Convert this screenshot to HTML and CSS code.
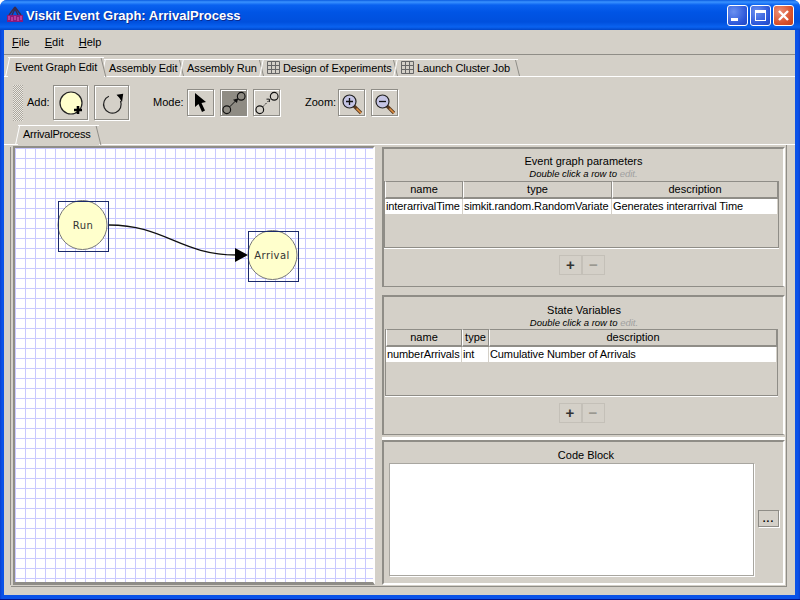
FILE: index.html
```html
<!DOCTYPE html>
<html lang="en">
<head>
  <meta charset="UTF-8">
  <title>Viskit Event Graph: ArrivalProcess</title>
  <link rel="stylesheet" href="styles.css">
</head>
<body>
<div class="window">
  <div class="titlebar">
    <svg class="app-icon" width="18" height="18" viewBox="0 0 18 18">
      <path d="M9 1 L3 9 M9 1 L15 9 M6 9 L9 3 L12 9" stroke="#3a2a4a" stroke-width="1.4" fill="none"/>
      <rect x="1" y="9" width="16" height="7" fill="#8a1a7a"/>
      <path d="M3 10v4M6 11v4M9 10v4M12 11v4M15 10v4" stroke="#e060c0" stroke-width="1"/>
    </svg>
    <span class="title-text">Viskit Event Graph: ArrivalProcess</span>
    <div class="win-buttons">
      <div class="win-btn"><span class="glyph-min"></span></div>
      <div class="win-btn"><span class="glyph-max"></span></div>
      <div class="win-btn win-close">
        <svg width="13" height="13" viewBox="0 0 13 13"><path d="M2 2 L11 11 M11 2 L2 11" stroke="#fff" stroke-width="2.4"/></svg>
      </div>
    </div>
  </div>

  <div class="client">
    <div class="menubar">
      <span class="menu"><u>F</u>ile</span>
      <span class="menu"><u>E</u>dit</span>
      <span class="menu"><u>H</u>elp</span>
    </div>

    <div class="tabs">
      <div class="tab tab-active w-ege">Event Graph Edit</div>
      <div class="tab w-ae">Assembly Edit</div>
      <div class="tab w-ar">Assembly Run</div>
      <div class="tab w-doe"><svg class="grid-icon" width="13" height="13" viewBox="0 0 13 13"><path d="M.5 .5h12v12h-12zM.5 4.500h12M.5 8.500h12M4.500 .5v12M8.500 .5v12" fill="none" stroke="#666"/></svg>Design of Experiments</div>
      <div class="tab w-lcj"><svg class="grid-icon" width="13" height="13" viewBox="0 0 13 13"><path d="M.5 .5h12v12h-12zM.5 4.500h12M.5 8.500h12M4.500 .5v12M8.500 .5v12" fill="none" stroke="#666"/></svg>Launch Cluster Job</div>
    </div>

    <div class="toolbar">
      <div class="gripper"></div>
      <span class="tool-label label-add">Add:</span>
      <button class="tool big">
        <svg width="27" height="27" viewBox="0 0 27 27">
          <circle cx="14" cy="14" r="11" fill="#ffffcc" stroke="#222" stroke-width="1.2"/>
          <path d="M21 17v8M17 21h8" stroke="#000" stroke-width="2.6"/>
        </svg>
      </button>
      <button class="tool big gap-big">
        <svg width="26" height="26" viewBox="0 0 26 26">
          <path d="M9.900 6.300 A8.800 8.800 0 1 0 21.500 11" fill="none" stroke="#222" stroke-width="1.2"/>
          <path d="M17.500 4.700 L24.200 3.700 L23 12.300 L20.500 8z" fill="#000"/>
        </svg>
      </button>
      <span class="tool-label label-mode">Mode:</span>
      <button class="tool">
        <svg width="16" height="22" viewBox="0 0 16 22"><path d="M2 1 L2 15 L5.500 12 L9 20 L12 18.500 L8.500 11 L13 10z" fill="#000"/></svg>
      </button>
      <button class="tool gap-small pressed">
        <svg width="26" height="26" viewBox="0 0 26 26">
          <circle cx="6" cy="20" r="4" fill="none" stroke="#111" stroke-width="1.200"/>
          <circle cx="21" cy="6" r="4" fill="none" stroke="#111" stroke-width="1.200"/>
          <path d="M9 17 L17 9" stroke="#111"/><path d="M18 8 L12.500 9.500 L16.500 13z" fill="#111"/>
        </svg>
      </button>
      <button class="tool gap-small">
        <svg width="26" height="26" viewBox="0 0 26 26">
          <circle cx="6" cy="20" r="4" fill="none" stroke="#111" stroke-width="1.200"/>
          <circle cx="21" cy="6" r="4" fill="none" stroke="#111" stroke-width="1.200"/>
          <path d="M9 17 L17 9" stroke="#111" stroke-dasharray="2 1.500"/><path d="M13 9h3M16 9v3" stroke="#111"/>
        </svg>
      </button>
      <span class="tool-label label-zoom">Zoom:</span>
      <button class="tool">
        <svg width="24" height="24" viewBox="0 0 24 24">
          <path d="M14 15 L21 22" stroke="#5a3a20" stroke-width="3.200"/><path d="M16.500 17.500 L21 22" stroke="#e09040" stroke-width="1.600"/>
          <circle cx="9.500" cy="10.500" r="6.500" fill="#c4c4e4" stroke="#222" stroke-width="1.200"/>
          <path d="M6 10.500h7M9.500 7v7" stroke="#111" stroke-width="1.300"/>
        </svg>
      </button>
      <button class="tool gap-small">
        <svg width="24" height="24" viewBox="0 0 24 24">
          <path d="M14 15 L21 22" stroke="#5a3a20" stroke-width="3.200"/><path d="M16.500 17.500 L21 22" stroke="#e09040" stroke-width="1.600"/>
          <circle cx="9.500" cy="10.500" r="6.500" fill="#c4c4e4" stroke="#222" stroke-width="1.200"/>
          <path d="M6 10.500h7" stroke="#111" stroke-width="1.300"/>
        </svg>
      </button>
    </div>

    <div class="subtabs">
      <div class="tab tab-active w-arrival">ArrivalProcess</div>
    </div>

    <div class="split">
      <div class="canvas">
        <svg class="graph" width="358" height="433" viewBox="0 0 358 433">
          <path d="M94 77 C 150 77, 165 107, 222 107" fill="none" stroke="#111" stroke-width="1.300"/>
          <path d="M220 100 L233 107 L220 114z" fill="#000"/>
          <circle cx="67.500" cy="77" r="24.500" fill="#ffffcc" stroke="#777" stroke-width="1"/>
          <rect x="43.500" y="53.500" width="50" height="50" fill="none" stroke="#1a2a6a"/>
          <text x="68" y="81" class="node-label">Run</text>
          <circle cx="257.500" cy="107" r="24.500" fill="#ffffcc" stroke="#777" stroke-width="1"/>
          <rect x="233.500" y="83.500" width="50" height="50" fill="none" stroke="#1a2a6a"/>
          <text x="257" y="111" class="node-label">Arrival</text>
        </svg>
      </div>

      <div class="side">
        <section class="panel panel-params">
          <h2 class="panel-title">Event graph parameters</h2>
          <p class="hint">Double click a row to <span class="hint-off">edit.</span></p>
          <div class="table">
            <div class="tr th cols-params"><span>name</span><span>type</span><span>description</span></div>
            <div class="tr td cols-params"><span>interarrivalTime</span><span>simkit.random.RandomVariate</span><span>Generates interarrival Time</span></div>
          </div>
          <div class="plusminus"><button class="pm">+</button><button class="pm pm-off">−</button></div>
        </section>

        <section class="panel panel-state">
          <h2 class="panel-title">State Variables</h2>
          <p class="hint">Double click a row to <span class="hint-off">edit.</span></p>
          <div class="table">
            <div class="tr th cols-state"><span>name</span><span>type</span><span>description</span></div>
            <div class="tr td cols-state"><span>numberArrivals</span><span>int</span><span>Cumulative Number of Arrivals</span></div>
          </div>
          <div class="plusminus"><button class="pm">+</button><button class="pm pm-off">−</button></div>
        </section>

        <section class="panel panel-code">
          <h2 class="panel-title">Code Block</h2>
          <div class="code-row">
            <div class="code-box"></div>
            <button class="more">...</button>
          </div>
        </section>
      </div>
    </div>
  </div>
</div>
</body>
</html>
```

FILE: styles.css
```css
* {
  box-sizing: border-box;
  margin: 0;
  padding: 0;
}

html, body {
  width: 800px;
  height: 600px;
  overflow: hidden;
}

body {
  font-family: "Liberation Sans", Arial, sans-serif;
  font-size: 11px;
  color: #000;
}

/* Window frame */
.window {
  width: 800px;
  height: 600px;
  display: flex;
  flex-direction: column;
  padding: 0 5px 4px 4px;
  background: linear-gradient(to right, #0a3fd0, #0a52e8 2px, #0a52e8 calc(100% - 2px), #0a3fd0);
  border-bottom: 1px solid #00138c;
  border-radius: 7px 7px 0 0;
}

.titlebar {
  height: 30px;
  flex: none;
  display: flex;
  align-items: center;
  margin: 0 -5px 0 -4px;
  padding: 0 6px;
  border-radius: 7px 7px 0 0;
  background: linear-gradient(to bottom, #0a5be0 0, #3a93ff 2px, #0a62f0 5px, #0055e5 12px, #0050dd 22px, #0a62f0 27px, #0046c8 30px);
}

.app-icon {
  margin-right: 2px;
}

.title-text {
  font: bold 13px "Liberation Sans", sans-serif;
  color: #fff;
  text-shadow: 1px 1px 0 #0a2a90;
}

.win-buttons {
  margin-left: auto;
  display: flex;
  gap: 2px;
}

.win-btn {
  width: 21px;
  height: 21px;
  display: flex;
  align-items: center;
  justify-content: center;
  border: 1px solid #fff;
  border-radius: 3px;
  background: radial-gradient(circle at 30% 30%, #6a90f0, #2a55d8 70%, #2248c0);
}

.win-close {
  background: radial-gradient(circle at 30% 30%, #ec9078, #d8502a 65%, #c04020);
}

.glyph-min {
  width: 7px;
  height: 3px;
  background: #fff;
  margin: 8px 6px 0 0;
}

.glyph-max {
  width: 11px;
  height: 11px;
  border: 1px solid #fff;
  border-top-width: 3px;
}

.client {
  flex: 1;
  display: flex;
  flex-direction: column;
  background: #d4d0c8;
  min-height: 0;
}

/* Menu */
.menubar {
  height: 25px;
  flex: none;
  display: flex;
  align-items: center;
  padding: 0 0 0 8px;
  gap: 15px;
  border-bottom: 1px solid #8f8d87;
}

/* Tabs */
.tabs {
  height: 22px;
  flex: none;
  display: flex;
  align-items: flex-end;
  padding-left: 4px;
  border-bottom: 1px solid #fff;
}

.tab {
  position: relative;
  height: 17px;
  flex: none;
  display: flex;
  align-items: center;
  padding: 0 0 1px 5px;
  white-space: nowrap;
  border-top: 1px solid #fff;
  letter-spacing: -0.1px;
}

.tab::before {
  content: "";
  position: absolute;
  left: -1px;
  top: 0;
  bottom: 0;
  border-left: 1px solid #fff;
  transform: skewX(-12deg);
}

.tab::after {
  content: "";
  position: absolute;
  right: 0;
  top: 0;
  bottom: 0;
  border-right: 1px solid #8f8d87;
  transform: skewX(14deg);
}

.tab-active {
  height: 20px;
  padding: 0 0 2px 7px;
  margin-bottom: -1px;
  background: #d4d0c8;
  z-index: 1;
}

.w-ege { width: 96px; }
.w-ae { width: 78px; }
.w-ar { width: 80px; }
.w-doe { width: 134px; }
.w-lcj { width: 122px; }

.w-arrival {
  width: 81px;
  padding: 0 0 3px 5px;
  letter-spacing: -0.25px;
}

.grid-icon {
  margin-right: 3px;
}

/* Toolbar */
.toolbar {
  height: 49px;
  flex: none;
  display: flex;
  align-items: center;
  padding: 2px 0 0 9px;
}

.gripper {
  width: 10px;
  height: 36px;
  background: repeating-conic-gradient(#aaa69e 0 25%, #ece9e2 0 50%) 0 0 / 2px 2px;
}

.tool-label {
  padding-bottom: 1px;
}

.label-add { margin: 0 5px 0 4px; width: 21px; }
.label-mode { margin: 0 6px 0 24px; width: 28px; }
.label-zoom { margin: 0 4px 0 25px; width: 29px; }

.tool {
  width: 27px;
  height: 27px;
  flex: none;
  display: flex;
  align-items: center;
  justify-content: center;
  background: #d4d0c8;
  border: 1px solid #8f8d87;
  box-shadow: 1px 1px 0 #fff, inset 1px 1px 0 #fff;
}

.big {
  width: 35px;
  height: 35px;
}

.gap-big { margin-left: 6px; }
.gap-small { margin-left: 6px; }

.pressed {
  background: #8f8c84;
}

/* Inner tabs */
.subtabs {
  height: 19px;
  flex: none;
  display: flex;
  align-items: flex-end;
  padding-left: 14px;
  border-bottom: 1px solid #fff;
}

.split {
  flex: 1;
  display: flex;
  min-height: 0;
  margin: 0 8px 8px 7px;
  padding: 1px 1px 1px 2px;
  border-right: 1px solid #8f8d87;
  border-bottom: 1px solid #8f8d87;
  box-shadow: -3px 0 0 -2px #8f8d87;
}

/* Graph canvas */
.canvas {
  width: 362px;
  flex: none;
  border: 2px solid #8f8d87;
  border-right-color: #fff;
  border-bottom: 3px solid #8f8d87;
  background-color: #fff;
  background-image:
    linear-gradient(to right, #c8c8ff 0 1px, transparent 1px 10px),
    linear-gradient(to bottom, #c8c8ff 0 1px, transparent 1px 10px);
  background-size: 10px 10px;
}

.graph {
  display: block;
}

.node-label {
  font: 10px "DejaVu Sans", sans-serif;
  letter-spacing: 0.4px;
  fill: #333;
  text-anchor: middle;
}

/* Right column */
.side {
  margin-left: 7px;
  width: 403px;
  flex: none;
  display: flex;
  flex-direction: column;
  padding-top: 1px;
}

.panel {
  background: #d4d0c8;
  border: 2px solid #8f8d87;
  border-right: 2px solid #fff;
  border-bottom: 1px solid #8f8d87;
  display: flex;
  flex-direction: column;
}

.panel-params { height: 140px; padding-top: 5px; }
.panel-state { height: 140px; margin-top: 8px; padding: 6px 0 0 1px; }
.panel-code { flex: 1; margin-top: 5px; padding: 6px 0 0 5px; border-bottom: 2px solid #fff; box-shadow: 0 -3px 0 #fff; }

.panel-title {
  font-size: 11px;
  font-weight: normal;
  text-align: center;
  line-height: 14px;
}

.hint {
  font-size: 9.500px;
  font-style: italic;
  text-align: center;
  line-height: 11px;
  height: 13px;
}

.panel-state .hint {
  height: 12px;
}

.hint-off {
  color: #a0a0a0;
}

.table {
  height: 67px;
  flex: none;
  margin-right: 4px;
  border: 1px solid #8f8d87;
  border-top: 0;
  box-shadow: 0 1px 0 #fff;
}

.panel-state .table {
  margin-right: 5px;
}

.tr {
  display: grid;
}

.cols-params { grid-template-columns: 78px 149px 1fr; }
.cols-state { grid-template-columns: 76px 27px 1fr; }

.th {
  height: 18px;
}

.th span {
  text-align: center;
  line-height: 15px;
  border: 1px solid #fff;
  border-right-color: #8f8d87;
  border-bottom: 2px solid #8f8d87;
  border-top-color: #8f8d87;
}

.td {
  height: 15px;
  background: #fff;
}

.td span {
  line-height: 15px;
  padding-left: 1px;
  border-right: 1px solid #d4d0c8;
  letter-spacing: -0.1px;
  white-space: nowrap;
  overflow: hidden;
}

.plusminus {
  display: flex;
  justify-content: center;
  margin-top: 7px;
  padding-right: 3px;
}

.panel-state .plusminus {
  padding-right: 5px;
}

.pm {
  width: 23px;
  height: 20px;
  font: bold 15px "Liberation Sans", sans-serif;
  line-height: 18px;
  color: #333;
  background: #d4d0c8;
  border: 1px solid #c4c0b8;
}

.pm-off {
  color: #9a9890;
}

.code-row {
  display: flex;
  align-items: flex-start;
  margin-top: 1px;
}

.code-box {
  width: 365px;
  height: 113px;
  background: #fff;
  border: 1px solid #a8a6a0;
  box-shadow: 1px 1px 0 #fff;
}

.more {
  width: 21px;
  height: 17px;
  margin: 47px 0 0 4px;
  font: bold 10px "Liberation Sans", sans-serif;
  letter-spacing: 1px;
  background: #d4d0c8;
  border: 1px solid #8f8d87;
  box-shadow: 1px 1px 0 #fff;
}
```
